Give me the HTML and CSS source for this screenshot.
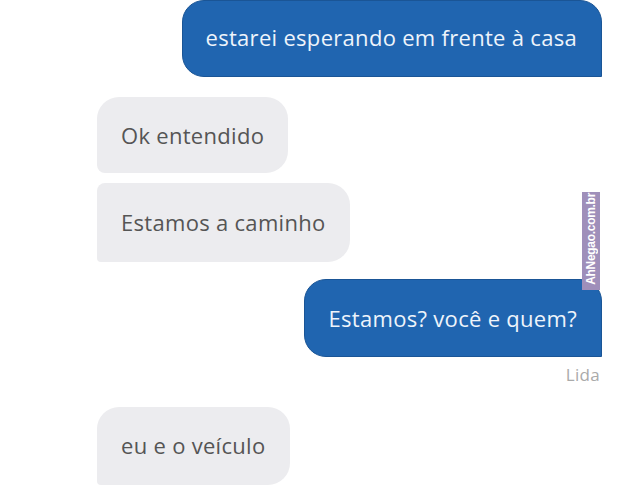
FILE: index.html
```html
<!DOCTYPE html>
<html lang="pt">
<head>
  <meta charset="UTF-8" />
  <title>Conversa</title>
  <link rel="stylesheet" href="styles.css">
</head>
<body>
  <div class="chat">
    <div class="msg sent first">estarei esperando em frente à casa</div>
    <div class="msg recv top">Ok entendido</div>
    <div class="msg recv mid">Estamos a caminho</div>
    <div class="msg sent second">Estamos? você e quem?</div>
    <div class="status">Lida</div>
    <div class="msg recv last">eu e o veículo</div>
  </div>

  <div class="watermark">
    <span class="wm-icon"></span>
    <span class="wm-text">AhNegao.com.br</span>
  </div>
</body>
</html>
```

FILE: styles.css
```css
* { box-sizing: border-box; }

body {
  margin: 0;
  background: #fff;
  font-family: 'Open Sans', 'Noto Sans', sans-serif;
  width: 620px;
  height: 493px;
  overflow: hidden;
  position: relative;
}

.chat {
  display: flex;
  flex-direction: column;
  padding: 0 18px 0 97px;
}

.msg {
  font-size: 22px;
  line-height: 29px;
  padding: 24px 24px;
  letter-spacing: 0.3px;
}

.sent {
  align-self: flex-end;
  background: #2065b0;
  color: #eef4fb;
  border: 1px solid #1a5596;
  border-radius: 22px 22px 0 22px;
}

.recv {
  align-self: flex-start;
  background: #ececef;
  color: #555;
  border-radius: 22px;
}

.first { margin-top: 0; height: 77px; padding-top: 22px; padding-left: 23px; }
.top { margin-top: 20px; height: 76px; border-radius: 22px 22px 22px 8px; }
.mid { margin-top: 10px; height: 79px; border-radius: 8px 22px 22px 4px; padding-top: 25px; }
.second { margin-top: 17px; height: 78px; }
.last { margin-top: 22px; height: 78px; border-radius: 22px 22px 22px 4px; }

.status {
  align-self: flex-end;
  margin-top: 8px;
  font-size: 17px;
  line-height: 20px;
  color: #aaa;
  padding-right: 2px;
  letter-spacing: 0.3px;
}

.watermark {
  position: absolute;
  left: 582px;
  top: 192px;
  width: 18px;
  height: 98px;
  background: #9f8fba;
  display: flex;
  flex-direction: column-reverse;
  align-items: center;
  gap: 2px;
  padding: 2px 0 3px;
}

.wm-text {
  writing-mode: vertical-rl;
  transform: rotate(180deg);
  color: #fff;
  font-family: 'Liberation Sans', Arial, sans-serif;
  font-size: 12px;
  font-weight: bold;
  letter-spacing: -0.3px;
}

.wm-icon {
  width: 9px;
  height: 9px;
  border-radius: 50%;
  background: #6a5d84;
}
```
